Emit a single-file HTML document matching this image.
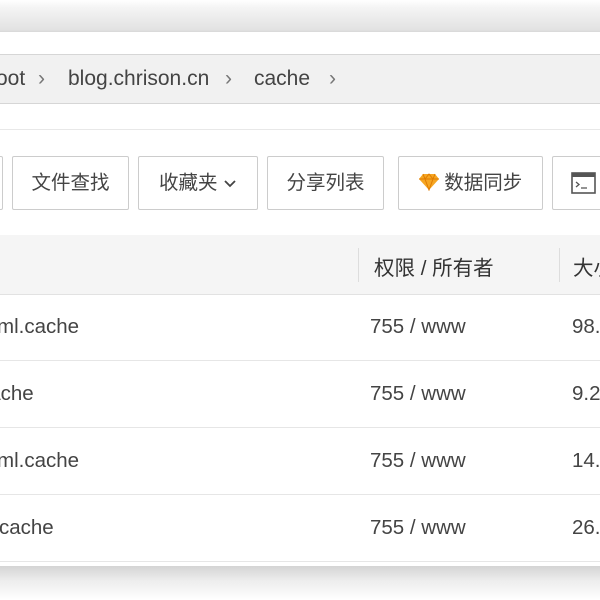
<!DOCTYPE html>
<html><head><meta charset="utf-8"><style>
body{margin:0;width:600px;height:600px;overflow:hidden;background:#fff;font-family:"Liberation Sans","Noto Sans CJK SC",sans-serif;position:relative}
.topsh{position:absolute;left:0;top:0;width:600px;height:32px;background:linear-gradient(#fff 0,#f4f4f4 8px,#e2e2e2 30px,#d8d8d8 32px)}
.botsh{position:absolute;left:0;top:566px;width:600px;height:34px;background:linear-gradient(#d4d4d4,#ececec 14px,#fff 34px)}
.panel{position:absolute;left:0;top:32px;width:600px;height:534px;background:#fff}
.bc{position:absolute;left:0;top:54px;width:600px;height:48px;background:#f1f1f1;border-top:1px solid #d6d6d6;border-bottom:1px solid #d6d6d6;font-size:21px;color:#444;white-space:nowrap}
.bc span{position:absolute;top:12px}
.sep{position:absolute;left:0;top:129px;width:600px;height:1px;background:#e8e8e8}
.btn{position:absolute;top:156px;height:54px;border:1px solid #ccc;border-radius:2px;background:#fff;font-size:19.5px;color:#444;box-sizing:border-box;line-height:52px;text-align:center;white-space:nowrap}
.hdr{position:absolute;left:0;top:235px;width:600px;height:59px;background:#f5f5f5;border-bottom:1px solid #e2e2e2;white-space:nowrap}
.hdr span{position:absolute;top:16px;font-size:20.5px;color:#333}
.vl{position:absolute;top:248px;width:1px;height:34px;background:#ddd}
.row{position:absolute;left:0;width:600px;height:66px;border-bottom:1px solid #e6e6e6;font-size:20.5px;color:#444;white-space:nowrap}
.row span{position:absolute;top:21px}
</style></head><body>
<div class="topsh"></div>
<div class="panel"></div>
<div class="bc">
<span style="left:-4px">oot</span><span style="left:38px;color:#777">›</span>
<span style="left:68px">blog.chrison.cn</span><span style="left:225px;color:#777">›</span>
<span style="left:254px">cache</span><span style="left:329px;color:#777">›</span>
</div>
<div class="sep"></div>
<div class="btn" style="left:-10px;width:13px"></div>
<div class="btn" style="left:12px;width:117px">文件查找</div>
<div class="btn" style="left:138px;width:120px">收藏夹 <svg width="14" height="10" viewBox="0 0 14 10"><path d="M2 2l5 5 5-5" fill="none" stroke="#444" stroke-width="1.8"/></svg></div>
<div class="btn" style="left:267px;width:117px">分享列表</div>
<div class="btn" style="left:398px;width:145px"><svg width="20" height="18" viewBox="0 0 20 18" style="vertical-align:-2px"><path d="M4 1h12l4 5-10 11L0 6z" fill="#f5a623"/><path d="M0 6h20M6 6l4 11 4-11M4 1l2 5 4-5 4 5 2-5" fill="none" stroke="#e07b00" stroke-width="1"/></svg> 数据同步</div>
<div class="btn" style="left:552px;width:60px;text-align:left;padding-left:18px"><svg width="25" height="22" viewBox="0 0 25 22" style="vertical-align:-5px"><rect x="1" y="1" width="23" height="20" fill="none" stroke="#555" stroke-width="1.6"/><rect x="1" y="1" width="23" height="4" fill="#555"/><path d="M5 10l3 2.5-3 2.5M10 16h6" fill="none" stroke="#555" stroke-width="1.3"/></svg></div>
<div class="hdr"><span style="left:374px">权限 / 所有者</span><span style="left:573px">大小</span></div>
<div class="vl" style="left:358px"></div><div class="vl" style="left:559px"></div>
<div class="row" style="top:294px"><span style="left:-3px">ml.cache</span><span style="left:370px">755 / www</span><span style="left:572px">98.1</span></div>
<div class="row" style="top:361px"><span style="left:-21px">cache</span><span style="left:370px">755 / www</span><span style="left:572px">9.2</span></div>
<div class="row" style="top:428px"><span style="left:-3px">ml.cache</span><span style="left:370px">755 / www</span><span style="left:572px">14.1</span></div>
<div class="row" style="top:495px"><span style="left:-1px">cache</span><span style="left:370px">755 / www</span><span style="left:572px">26.1</span></div>
<div class="botsh"></div>
</body></html>
